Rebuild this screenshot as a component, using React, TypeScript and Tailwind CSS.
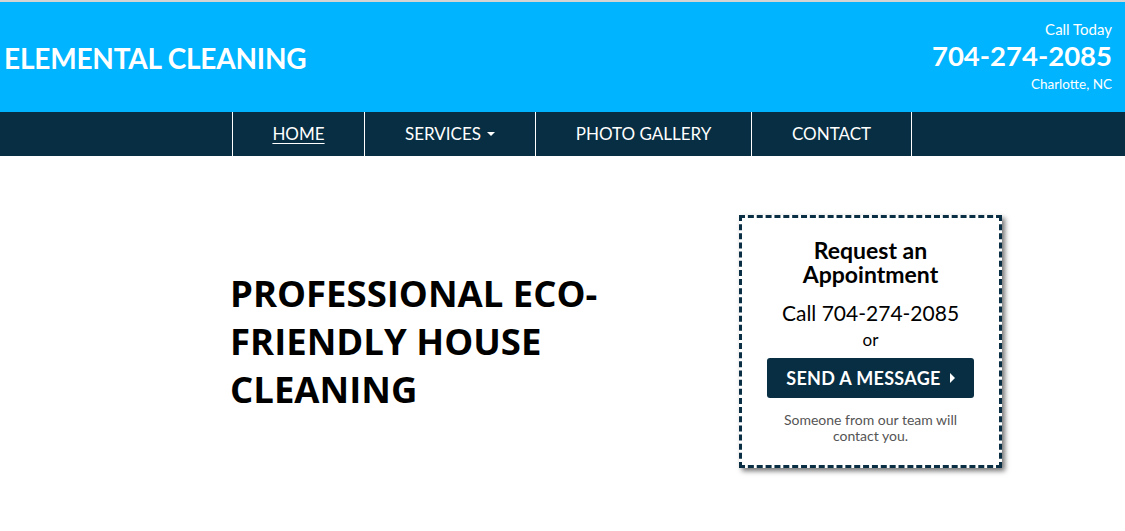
import { useState } from "react";

const NAV = [
  { label: "HOME", w: "w-[133px]", active: true },
  { label: "SERVICES", w: "w-[171px]", caret: true },
  { label: "PHOTO GALLERY", w: "w-[216px]" },
  { label: "CONTACT", w: "w-[160px]" },
];

export default function App() {
  const [hover, setHover] = useState("");

  return (
    <div className="min-h-[531px] bg-white font-['Lato','Liberation_Sans',sans-serif]">
      <div className="h-[2px] bg-[#d4d4d4]" />
      <header className="flex h-[110px] items-center justify-between bg-[#00b4ff] pl-[4px] pr-[13px] text-white">
        <h1 className="mt-[2px] text-[28px] font-bold tracking-[-0.2px]">ELEMENTAL CLEANING</h1>
        <div className="flex flex-col items-end">
          <span className="text-[15px] leading-[18px]">Call Today</span>
          <span className="text-[27.5px] font-bold leading-[36px]">704-274-2085</span>
          <span className="text-[13.5px] leading-[20px]">Charlotte, NC</span>
        </div>
      </header>

      <nav className="flex h-[44px] bg-[#072e42] pl-[232px]">
        {NAV.map((item, i) => (
          <a
            key={item.label}
            href="#"
            onMouseEnter={() => setHover(item.label)}
            onMouseLeave={() => setHover("")}
            className={`flex h-full items-center justify-center border-r border-white text-[17px] text-white ${item.w} ${
              i === 0 ? "border-l" : ""
            } ${item.active || hover === item.label ? "underline underline-offset-[3px]" : ""}`}
          >
            {item.label}
            {item.caret && (
              <span className="ml-[6px] inline-block border-x-[4px] border-t-[4px] border-x-transparent border-t-white" />
            )}
          </a>
        ))}
      </nav>

      <main className="flex items-start pt-[59px] pl-[230px]">
        <h2 className="mt-[54px] w-[400px] font-['Open_Sans','Liberation_Sans',sans-serif] text-[36.5px] font-bold leading-[48px] text-black">
          PROFESSIONAL ECO-FRIENDLY HOUSE CLEANING
        </h2>

        <div className="ml-[109px] flex w-[263px] flex-col items-center border-[3px] border-dashed border-[#0a2f44] bg-white px-[24px] pt-[20px] pb-[21px] text-center shadow-[3px_3px_5px_rgba(0,0,0,0.55)]">
          <h3 className="text-[23px] font-bold leading-[24px] text-black">
            <span className="block">Request an</span>
            <span className="block">Appointment</span>
          </h3>
          <p className="mt-[14px] text-[21px] leading-[26px] text-black">Call 704-274-2085</p>
          <p className="mt-[2px] text-[17px] leading-[24px] text-black">or</p>
          <button className="mt-[6px] flex h-[40px] w-[207px] items-center justify-center gap-[9px] rounded-[3px] bg-[#072e42] text-[18px] font-bold tracking-[0.3px] text-white">
            SEND A MESSAGE
            <span className="inline-block border-y-[5px] border-l-[5px] border-y-transparent border-l-white" />
          </button>
          <p className="mt-[14px] max-w-[195px] text-[14px] leading-[16px] text-[#555]">
            Someone from our team will contact you.
          </p>
        </div>
      </main>
    </div>
  );
}
